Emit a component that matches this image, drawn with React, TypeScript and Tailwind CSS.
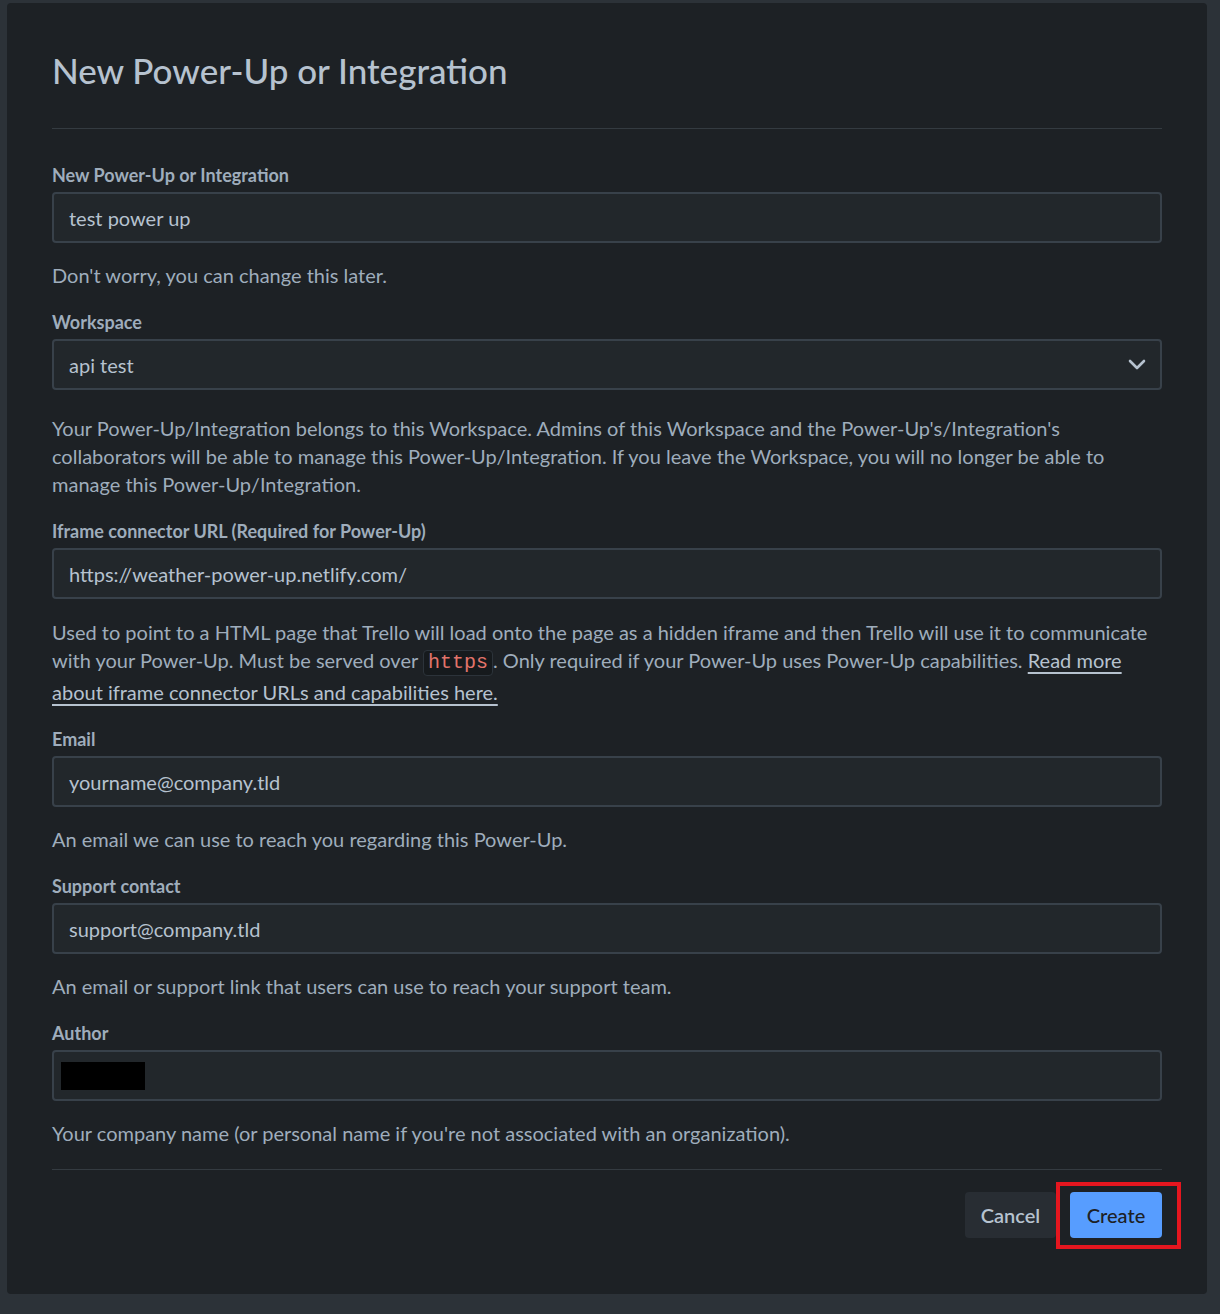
import { ReactNode } from "react";

const Label = ({ children }: { children: ReactNode }) => (
    <label className="block text-[18px] leading-[20px] font-bold text-[#9fadbc]">{children}</label>
);

const Input = ({ children }: { children?: ReactNode }) => (
    <div className="mt-[7px] h-[51px] flex items-center rounded-[4px] border-2 border-[#38414a] bg-[#22272b] px-[15px] text-[20px] text-[#b6c2cf]">
        {children}
    </div>
);

const Help = ({ children, className = "mt-[18px]" }: { children: ReactNode; className?: string }) => (
    <p className={`${className} text-[20px] leading-[28px] text-[#9fadbc]`}>{children}</p>
);

const App = () => {
    return (
        <div className="min-h-screen bg-[#2c3238] pl-[7px] pr-[13px] pt-[3px] pb-[18px] font-['Lato',sans-serif]">
            <div className="rounded-[4px] bg-[#1d2125] px-[45px] pt-[47px] pb-[56px]">
                <h1 className="text-[35px] leading-[40px] font-medium text-[#b6c2cf]">New Power-Up or Integration</h1>
                <div className="mt-[38px] h-px bg-[#343b41]" />

                <div className="mt-[36px]">
                    <Label>New Power-Up or Integration</Label>
                    <Input>test power up</Input>
                    <Help>Don't worry, you can change this later.</Help>
                </div>

                <div className="mt-[23px]">
                    <Label>Workspace</Label>
                    <Input>
                        <span className="flex-1">api test</span>
                        <svg width="18" height="11" viewBox="0 0 18 11" fill="none" className="-mr-[1px]">
                            <path d="M2 2l7 7 7-7" stroke="#b6c2cf" strokeWidth="2.6" strokeLinecap="round" strokeLinejoin="round" />
                        </svg>
                    </Input>
                    <Help className="mt-[24px]">
                        Your Power-Up/Integration belongs to this Workspace. Admins of this Workspace and the Power-Up's/Integration's
                        <br />
                        collaborators will be able to manage this Power-Up/Integration. If you leave the Workspace, you will no longer be able to
                        <br />
                        manage this Power-Up/Integration.
                    </Help>
                </div>

                <div className="mt-[23px]">
                    <Label>Iframe connector URL (Required for Power-Up)</Label>
                    <Input>https://weather-power-up.netlify.com/</Input>
                    <Help className="mt-[19px]">
                        Used to point to a HTML page that Trello will load onto the page as a hidden iframe and then Trello will use it to communicate
                        <br />
                        with your Power-Up. Must be served over{" "}
                        <code className="mb-[2px] inline-block h-[26px] rounded-[4px] border border-[#2c333a] bg-[#161a1d] px-[4px] align-baseline font-['Liberation_Mono',monospace] text-[20px] leading-[24px] text-[#e2746b]">
                            https
                        </code>
                        . Only required if your Power-Up uses Power-Up capabilities.{" "}
                        <a href="#" className="text-[#b6c2cf] underline underline-offset-[4px]">
                            Read more
                            <br />
                            about iframe connector URLs and capabilities here.
                        </a>
                    </Help>
                </div>

                <div className="mt-[23px]">
                    <Label>Email</Label>
                    <Input>yourname@company.tld</Input>
                    <Help>An email we can use to reach you regarding this Power-Up.</Help>
                </div>

                <div className="mt-[23px]">
                    <Label>Support contact</Label>
                    <Input>support@company.tld</Input>
                    <Help>An email or support link that users can use to reach your support team.</Help>
                </div>

                <div className="mt-[23px]">
                    <Label>Author</Label>
                    <Input>
                        <span className="-ml-[8px] block h-[28px] w-[84px] bg-black" />
                    </Input>
                    <Help>Your company name (or personal name if you're not associated with an organization).</Help>
                </div>

                <div className="mt-[22px] h-px bg-[#343b41]" />

                <div className="mt-[22px] flex justify-end gap-[14px]">
                    <button className="h-[46px] w-[91px] rounded-[4px] bg-[#282d33] text-[20px] font-semibold text-[#b6c2cf]">Cancel</button>
                    <div className="relative">
                        <button className="h-[46px] w-[92px] rounded-[4px] bg-[#579dff] text-[20px] font-medium text-[#1d2125]">Create</button>
                        <div className="absolute left-[-14px] right-[-19px] top-[-10px] bottom-[-11px] border-4 border-[#e5161f]" />
                    </div>
                </div>
            </div>
        </div>
    );
};

export default App;
